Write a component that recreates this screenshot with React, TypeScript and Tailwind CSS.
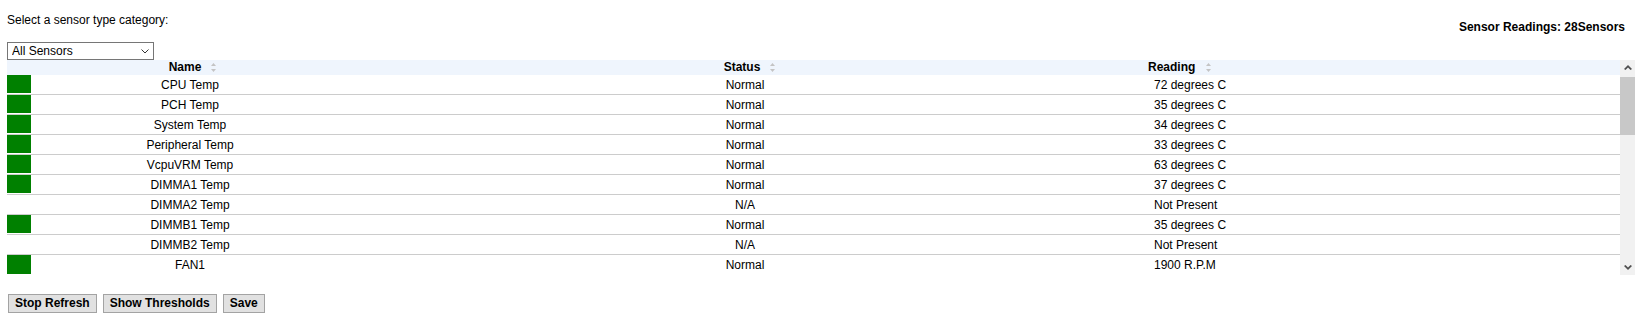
import React from 'react';

type Sensor = {
    name: string;
    status: string;
    reading: string;
    ok: boolean;
};

const sensors: Sensor[] = [
    { name: 'CPU Temp', status: 'Normal', reading: '72 degrees C', ok: true },
    { name: 'PCH Temp', status: 'Normal', reading: '35 degrees C', ok: true },
    { name: 'System Temp', status: 'Normal', reading: '34 degrees C', ok: true },
    { name: 'Peripheral Temp', status: 'Normal', reading: '33 degrees C', ok: true },
    { name: 'VcpuVRM Temp', status: 'Normal', reading: '63 degrees C', ok: true },
    { name: 'DIMMA1 Temp', status: 'Normal', reading: '37 degrees C', ok: true },
    { name: 'DIMMA2 Temp', status: 'N/A', reading: 'Not Present', ok: false },
    { name: 'DIMMB1 Temp', status: 'Normal', reading: '35 degrees C', ok: true },
    { name: 'DIMMB2 Temp', status: 'N/A', reading: 'Not Present', ok: false },
    { name: 'FAN1', status: 'Normal', reading: '1900 R.P.M', ok: true },
];

const SortIcon = () => (
    <svg width="5" height="9" viewBox="0 0 5 9" className="shrink-0">
        <path d="M2.5 0 L5 3 L0 3 Z" fill="#c4c4c4" />
        <path d="M0 6 L5 6 L2.5 9 Z" fill="#c4c4c4" />
    </svg>
);

const Chevron = ({ down }: { down?: boolean }) => (
    <svg width="8" height="5" viewBox="0 0 8 5" className={down ? 'rotate-180' : ''}>
        <path d="M0 4 L4 0 L8 4 L6.5 5 L4 2.5 L1.5 5 Z" fill="#505050" />
    </svg>
);

const grid = 'grid grid-cols-[24px_318px_792px_1fr]';

const App: React.FC = () => {
    return (
        <div className="min-h-[326px] bg-white pl-[7px] pr-[10px] pt-[13px] text-[12px] text-black font-['Liberation_Sans',Arial,sans-serif]">
            <div className="flex justify-between">
                <div>
                    <div className="leading-[14px]">Select a sensor type category:</div>
                    <div className="relative mt-[15px] w-[147px]">
                        <select className="block h-[18px] w-full appearance-none border border-[#767676] bg-white pl-[4px] text-[12px] leading-[16px] text-black outline-none">
                            <option>All Sensors</option>
                            <option>Temperature</option>
                            <option>Voltage</option>
                            <option>Fan</option>
                        </select>
                        <svg width="8" height="5" viewBox="0 0 8 5" className="pointer-events-none absolute right-[5px] top-[7px]">
                            <path d="M0.5 0.5 L4 4 L7.5 0.5" fill="none" stroke="#333" strokeWidth="1" />
                        </svg>
                    </div>
                </div>
                <div className="pt-[7px] pr-[10px] font-bold leading-[14px]">Sensor Readings: 28Sensors</div>
            </div>

            <div className="flex h-[215px]">
                <div className="flex-1 overflow-hidden">
                    <div className={`${grid} h-[15px] items-center bg-[#eff5fd] font-bold leading-[15px]`}>
                        <div />
                        <div className="flex items-center justify-center gap-[10px] pl-[5px]">
                            <span>Name</span>
                            <SortIcon />
                        </div>
                        <div className="flex items-center justify-center gap-[10px] pl-[9px]">
                            <span>Status</span>
                            <SortIcon />
                        </div>
                        <div className="flex items-center gap-[11px] pl-[7px]">
                            <span>Reading</span>
                            <SortIcon />
                        </div>
                    </div>
                    {sensors.map((s) => (
                        <div key={s.name} className={`${grid} h-[20px] border-b border-[#cccccc] leading-[14px] last:border-b-0`}>
                            <div className="pb-px">
                                {s.ok && <div className="h-full bg-[#008000]" />}
                            </div>
                            <div className="flex items-center justify-center">{s.name}</div>
                            <div className="flex items-center justify-center">{s.status}</div>
                            <div className="flex items-center pl-[13px]">{s.reading}</div>
                        </div>
                    ))}
                </div>
                {/* scrollbar */}
                <div className="flex w-[15px] flex-col bg-[#f1f1f1]">
                    <div className="flex h-[15px] items-center justify-center">
                        <Chevron />
                    </div>
                    <div className="mt-[2px] h-[58px] bg-[#c8c8c8]" />
                    <div className="flex-1" />
                    <div className="flex h-[15px] items-center justify-center">
                        <Chevron down />
                    </div>
                </div>
            </div>

            <div className="mt-[19px] flex gap-[6px] pl-px">
                <button className="h-[19px] border border-[#a3a3a3] bg-[#e1e1e1] px-[6px] text-[12px] font-bold leading-[17px]">Stop Refresh</button>
                <button className="h-[19px] border border-[#a3a3a3] bg-[#e1e1e1] px-[6px] text-[12px] font-bold leading-[17px]">Show Thresholds</button>
                <button className="h-[19px] border border-[#a3a3a3] bg-[#e1e1e1] px-[6px] text-[12px] font-bold leading-[17px]">Save</button>
            </div>
        </div>
    );
};

export default App;
